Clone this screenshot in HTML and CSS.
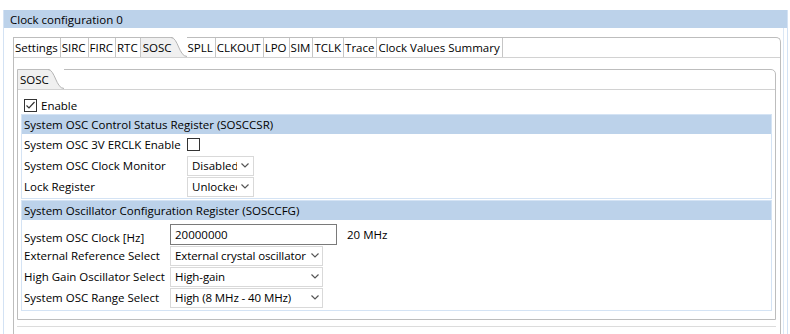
FILE: index.html
```html
<!DOCTYPE html>
<html lang="en">
<head>
  <meta charset="UTF-8">
  <title>Clock configuration 0</title>
  <link rel="stylesheet" href="styles.css">
</head>
<body>

  <div class="editor">
    <div class="editorTitle">Clock configuration 0</div>
    <div class="editorBody">

      <div class="folder outerFolder">
        <div class="tabRow">
          <span class="tab first">Settings</span>
          <span class="tab">SIRC</span>
          <span class="tab">FIRC</span>
          <span class="tab">RTC</span>
          <span class="tab active">SOSC
            <svg class="tabCurve" width="16" height="20" viewBox="0 0 16 20">
              <path d="M0,0 C7,0 8,19 16,19 L16,0 Z" fill="#fff"/>
              <path d="M0,0.5 C7,0.5 8,19.5 16,19.5" fill="none" stroke="#b4b4b4"/>
            </svg>
          </span>
          <span class="tab">SPLL</span>
          <span class="tab">CLKOUT</span>
          <span class="tab">LPO</span>
          <span class="tab">SIM</span>
          <span class="tab">TCLK</span>
          <span class="tab">Trace</span>
          <span class="tab">Clock Values Summary</span>
        </div>

        <div class="folderContent">
          <div class="folder innerFolder">
            <div class="tabRow">
              <span class="tab first active">SOSC
                <svg class="tabCurve" width="16" height="20" viewBox="0 0 16 20">
                  <path d="M0,0 C7,0 8,19 16,19 L16,0 Z" fill="#fff"/>
                  <path d="M0,0.5 C7,0.5 8,19.5 16,19.5" fill="none" stroke="#b4b4b4"/>
                </svg>
              </span>
            </div>

            <div class="pageContent">
              <div class="enableRow">
                <span class="checkbox">
                  <svg width="11" height="11" viewBox="0 0 11 11"><polyline points="1.5,5.5 4,8 9.5,2" fill="none" stroke="#333" stroke-width="1.2"/></svg>
                </span>
                Enable
              </div>

              <div class="group">
                <div class="groupHead">System OSC Control Status Register (SOSCCSR)</div>
                <div class="row">
                  <span class="label wideLabel">System OSC 3V ERCLK Enable</span>
                  <span class="checkbox"></span>
                </div>
                <div class="row">
                  <span class="label wideLabel">System OSC Clock Monitor</span>
                  <span class="combo small">
                    <span class="comboText">Disabled</span>
                    <span class="comboArrow"><svg width="8" height="5" viewBox="0 0 8 5"><polyline points="0.5,0.5 4,4 7.5,0.5" fill="none" stroke="#555" stroke-width="1.2"/></svg></span>
                  </span>
                </div>
                <div class="row">
                  <span class="label wideLabel">Lock Register</span>
                  <span class="combo small">
                    <span class="comboText">Unlocked</span>
                    <span class="comboArrow"><svg width="8" height="5" viewBox="0 0 8 5"><polyline points="0.5,0.5 4,4 7.5,0.5" fill="none" stroke="#555" stroke-width="1.2"/></svg></span>
                  </span>
                </div>
              </div>

              <div class="group cfgGroup">
                <div class="groupHead">System Oscillator Configuration Register (SOSCCFG)</div>
                <div class="row inputRow">
                  <span class="label">System OSC Clock [Hz]</span>
                  <span class="textInput">20000000</span>
                  <span class="unit">20 MHz</span>
                </div>
                <div class="row">
                  <span class="label">External Reference Select</span>
                  <span class="combo">
                    <span class="comboText">External crystal oscillator</span>
                    <span class="comboArrow"><svg width="8" height="5" viewBox="0 0 8 5"><polyline points="0.5,0.5 4,4 7.5,0.5" fill="none" stroke="#555" stroke-width="1.2"/></svg></span>
                  </span>
                </div>
                <div class="row">
                  <span class="label">High Gain Oscillator Select</span>
                  <span class="combo">
                    <span class="comboText">High-gain</span>
                    <span class="comboArrow"><svg width="8" height="5" viewBox="0 0 8 5"><polyline points="0.5,0.5 4,4 7.5,0.5" fill="none" stroke="#555" stroke-width="1.2"/></svg></span>
                  </span>
                </div>
                <div class="row">
                  <span class="label">System OSC Range Select</span>
                  <span class="combo">
                    <span class="comboText">High (8 MHz - 40 MHz)</span>
                    <span class="comboArrow"><svg width="8" height="5" viewBox="0 0 8 5"><polyline points="0.5,0.5 4,4 7.5,0.5" fill="none" stroke="#555" stroke-width="1.2"/></svg></span>
                  </span>
                </div>
              </div>
            </div>
          </div>
          <div class="footerLine"></div>
        </div>
      </div>

    </div>
  </div>

</body>
</html>
```

FILE: styles.css
```css
body {
  margin: 0;
  font-family: "Open Sans", "Segoe UI", sans-serif;
  font-size: 11.5px;
  color: #000;
  background-color: #fff;
  overflow: hidden;
}
.editor {
  box-sizing: border-box;
  width: 785px;
  height: 330px;
  margin: 10px 0 0 3px;
  border-left: 1px solid #d3e2f4;
  border-right: 1px solid #d3e2f4;
  display: flex;
  flex-direction: column;
}
.editorTitle {
  height: 18px;
  line-height: 19px;
  padding-left: 6px;
  background-color: #bcd2ea;
}
.editorBody {
  flex: 1;
  margin-right: 3px;
  padding: 9px 2px 0 9px;
  border-right: 1px solid #dbe7f5;
  display: flex;
  flex-direction: column;
}
.folder {
  border: 1px solid #bdbdbd;
  border-top-right-radius: 5px;
  background-color: #fff;
}
.outerFolder {
  flex: 1;
  border-bottom: none;
  display: flex;
  flex-direction: column;
}
.tabRow {
  display: flex;
  height: 19px;
  border-bottom: 1px solid #d2d2d2;
}
.tab {
  line-height: 19px;
  padding: 0 2px 0 1px;
  border-right: 1px solid #c6c6c6;
  white-space: nowrap;
}
.tab.active {
  position: relative;
  background-color: #f0f0f0;
  border-right: none;
  padding-left: 2px;
  padding-right: 15px;
}
.tabCurve {
  position: absolute;
  top: -1px;
  right: 0;
}
.folderContent {
  flex: 1;
  padding: 11px 4px 0 3px;
}
.innerFolder {
  border-bottom: 1px solid #bdbdbd;
}
.pageContent {
  padding: 9px 3px 8px 3px;
}
.enableRow {
  display: flex;
  align-items: center;
  gap: 4px;
  height: 13px;
  margin: 0 0 2px 3px;
}
.checkbox {
  box-sizing: border-box;
  width: 13px;
  height: 13px;
  border: 1px solid #333;
  background-color: #fff;
  display: inline-flex;
  align-items: center;
  justify-content: center;
}
.group {
  border: 1px solid #d4e3f4;
  padding-bottom: 1px;
}
.cfgGroup {
  margin-top: 1px;
  padding-bottom: 2px;
}
.groupHead {
  height: 19px;
  line-height: 19px;
  padding-left: 2px;
  background-color: #bcd2ea;
}
.row {
  display: flex;
  align-items: center;
  height: 21px;
}
.inputRow {
  height: 25px;
  align-items: flex-end;
}
.label {
  box-sizing: border-box;
  width: 148px;
  padding-left: 2px;
  white-space: nowrap;
}
.wideLabel {
  width: 165px;
}
.combo {
  box-sizing: border-box;
  display: flex;
  width: 153px;
  height: 20px;
  border: 1px solid #d9d9d9;
  background-color: #fff;
}
.combo.small {
  width: 67px;
}
.comboText {
  flex: 1;
  overflow: hidden;
  white-space: nowrap;
  padding-left: 4px;
  line-height: 18px;
  letter-spacing: -0.1px;
}
.combo.small .comboText {
  letter-spacing: 0;
}
.comboArrow {
  width: 15px;
  display: flex;
  align-items: center;
  justify-content: center;
}
.combo.small .comboArrow {
  width: 16px;
}
.textInput {
  box-sizing: border-box;
  width: 167px;
  height: 21px;
  line-height: 19px;
  padding-left: 4px;
  border: 1px solid #7a7a7a;
}
.unit {
  margin-left: 10px;
  line-height: 21px;
}
.footerLine {
  margin-top: 6px;
  border-top: 1px solid #dcdcdc;
}
```
